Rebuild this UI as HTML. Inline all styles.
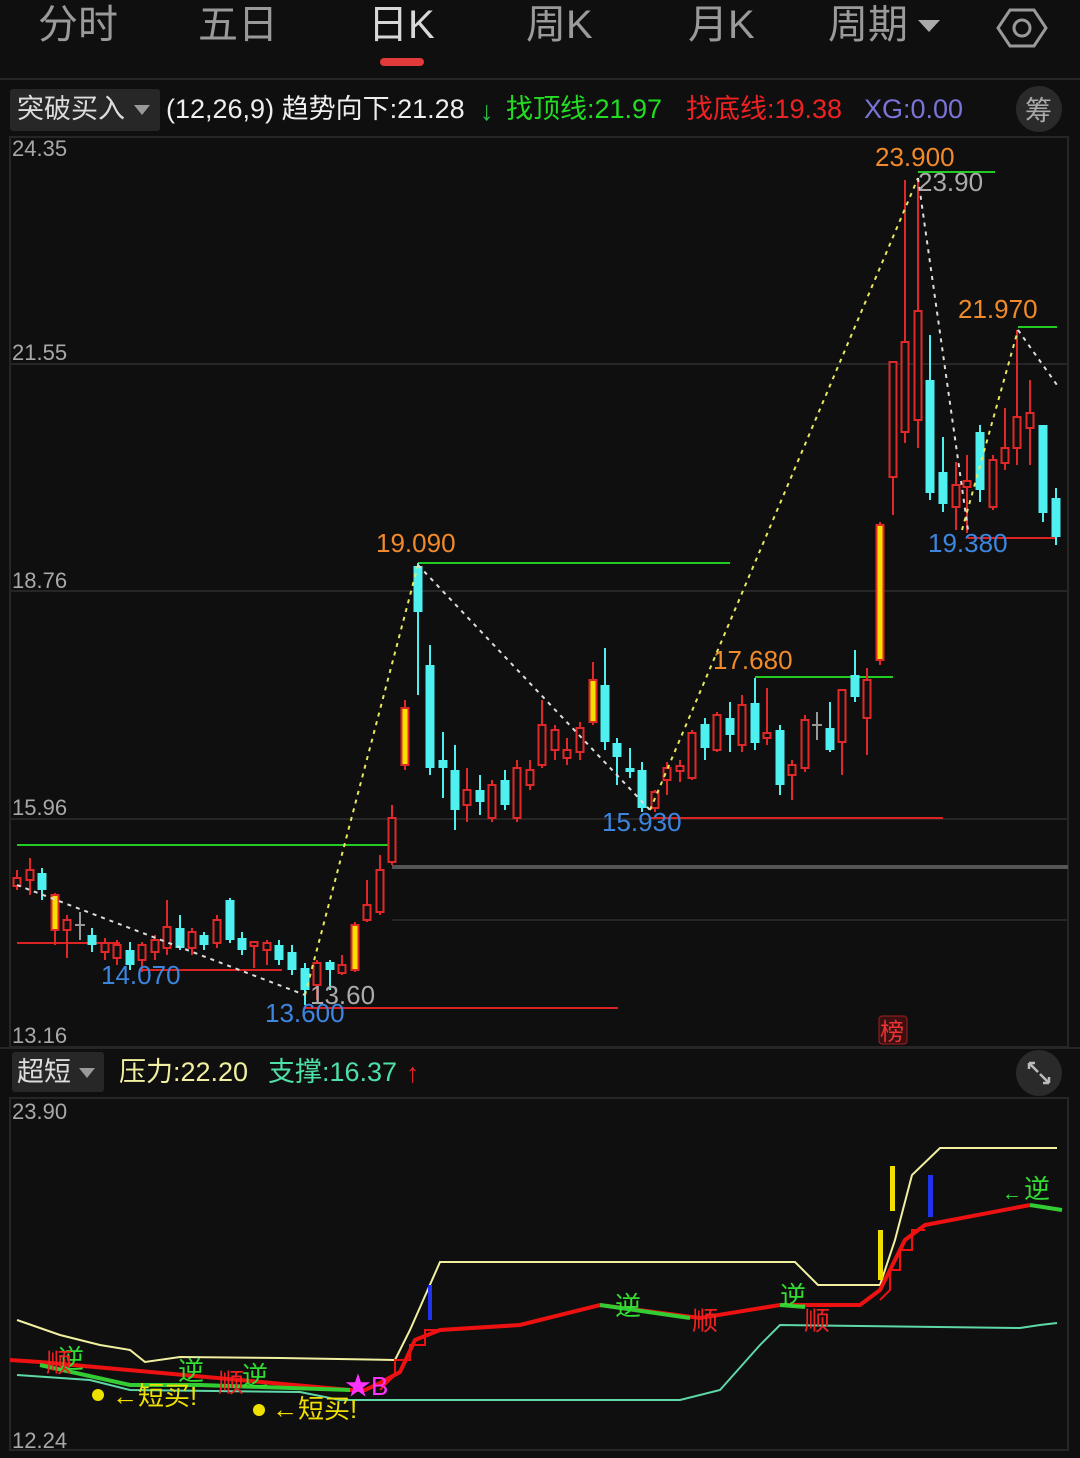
<!DOCTYPE html>
<html><head><meta charset="utf-8">
<style>
html,body{margin:0;padding:0;background:#0f0f0f;width:1080px;height:1458px;overflow:hidden}
svg{display:block}
text{font-family:"Liberation Sans","Noto Sans CJK SC",sans-serif}
</style></head>
<body>
<svg id="s" width="1080" height="1458" viewBox="0 0 1080 1458" xmlns="http://www.w3.org/2000/svg">
<rect width="1080" height="1458" fill="#0f0f0f"/>
<!-- tabs -->
<g font-size="40" fill="#9a9a9a">
<text x="38" y="38">分时</text>
<text x="198" y="38">五日</text>
<text x="368" y="38" fill="#d8d8d8">日K</text>
<text x="526" y="38">周K</text>
<text x="688" y="38">月K</text>
<text x="828" y="38">周期</text>
</g>
<path d="M918 20 L940 20 L929 32 Z" fill="#aaa"/>
<path d="M1010 10 L1034 10 L1046 28 L1034 46 L1010 46 L998 28 Z" fill="none" stroke="#999" stroke-width="3"/>
<circle cx="1022" cy="28" r="8" fill="none" stroke="#999" stroke-width="3"/>
<rect x="380" y="58" width="44" height="8" rx="4" fill="#e23a3a"/>
<rect x="0" y="78" width="1080" height="2" fill="#262626"/>
<!-- indicator row -->
<rect x="10" y="89" width="150" height="42" rx="3" fill="#272727"/>
<text x="17" y="118" font-size="27" fill="#ddd">突破买入</text>
<path d="M134 105 L150 105 L142 115 Z" fill="#999"/>
<text x="166" y="118" font-size="27" fill="#eee">(12,26,9) 趋势向下:21.28</text>
<text x="480" y="120" font-size="27" fill="#2ec24a">↓</text>
<text x="506" y="118" font-size="27" fill="#22dd22">找顶线:21.97</text>
<text x="686" y="118" font-size="27" fill="#ee2222">找底线:19.38</text>
<text x="864" y="118" font-size="27" fill="#7a74d8">XG:0.00</text>
<circle cx="1039" cy="109" r="23" fill="#2a2a2a"/>
<text x="1025" y="120" font-size="27" fill="#aaa">筹</text>
<!-- main chart frame -->
<rect x="10" y="137" width="1058" height="910" fill="none" stroke="#262626" stroke-width="2"/>
<g stroke="#262626" stroke-width="2">
<line x1="10" y1="364" x2="1068" y2="364"/>
<line x1="10" y1="591" x2="1068" y2="591"/>
<line x1="10" y1="819" x2="1068" y2="819"/>
<line x1="392" y1="920" x2="1068" y2="920"/>
</g>
<rect x="392" y="865" width="676" height="4" fill="#555"/>
<g font-size="22" fill="#a8a8a8">
<text x="12" y="156">24.35</text>
<text x="12" y="360">21.55</text>
<text x="12" y="588">18.76</text>
<text x="12" y="815">15.96</text>
<text x="12" y="1043">13.16</text>
</g>
<!-- level lines -->
<g stroke-width="2">
<line x1="17" y1="845" x2="392" y2="845" stroke="#22cc22"/>
<line x1="418" y1="563" x2="730" y2="563" stroke="#22cc22"/>
<line x1="755" y1="677" x2="893" y2="677" stroke="#22cc22"/>
<line x1="918" y1="172" x2="995" y2="172" stroke="#22cc22"/>
<line x1="1018" y1="327" x2="1057" y2="327" stroke="#22cc22"/>
<line x1="17" y1="943" x2="120" y2="943" stroke="#dd2222"/>
<line x1="140" y1="970" x2="282" y2="970" stroke="#dd2222"/>
<line x1="305" y1="1008" x2="618" y2="1008" stroke="#dd2222"/>
<line x1="650" y1="818" x2="943" y2="818" stroke="#dd2222"/>
<line x1="968" y1="538" x2="1057" y2="538" stroke="#dd2222"/>
</g>
<g id="candles"></g>
<!-- zigzag -->
<g fill="none" stroke-width="2" stroke-dasharray="4 5">
<polyline points="305,995 418,565" stroke="#e8e860"/>
<polyline points="650,810 918,178" stroke="#e8e860"/>
<polyline points="962,530 1018,330" stroke="#e8e860"/>
<polyline points="17,885 305,995" stroke="#ddd"/>
<polyline points="418,565 650,810" stroke="#ddd"/>
<polyline points="918,178 968,530" stroke="#ddd"/>
<polyline points="1018,330 1057,385" stroke="#ddd"/>
</g>
<g font-size="26">
<text x="875" y="166" fill="#f08a2a">23.900</text>
<text x="918" y="191" fill="#aaa">23.90</text>
<text x="958" y="318" fill="#f08a2a">21.970</text>
<text x="376" y="552" fill="#f08a2a">19.090</text>
<text x="713" y="669" fill="#f08a2a">17.680</text>
<text x="928" y="552" fill="#3d86e0">19.380</text>
<text x="602" y="831" fill="#3d86e0">15.930</text>
<text x="101" y="984" fill="#3d86e0">14.070</text>
<text x="265" y="1022" fill="#3d86e0">13.600</text>
<text x="310" y="1004" fill="#aaa">13.60</text>
</g>
<rect x="879" y="1016" width="28" height="28" rx="3" fill="#3a1010" stroke="#a02020"/>
<text x="880" y="1040" font-size="24" fill="#ee3333">榜</text>
<!-- sub header -->
<rect x="0" y="1047" width="1080" height="2" fill="#262626"/>
<rect x="12" y="1052" width="92" height="40" rx="3" fill="#272727"/>
<text x="17" y="1081" font-size="27" fill="#ddd">超短</text>
<path d="M79 1068 L95 1068 L87 1078 Z" fill="#999"/>
<text x="119" y="1081" font-size="27" fill="#f0f0a0">压力:22.20</text>
<text x="268" y="1081" font-size="27" fill="#4fe0a8">支撑:16.37</text>
<text x="406" y="1082" font-size="27" fill="#ee2222">↑</text>
<circle cx="1039" cy="1073" r="23" fill="#2a2a2a"/>
<path d="M1029 1063 L1035 1063 M1029 1063 L1029 1069 M1029 1063 L1038 1072 M1049 1083 L1043 1083 M1049 1083 L1049 1077 M1049 1083 L1040 1074" stroke="#bbb" stroke-width="2.5" fill="none"/>
<rect x="10" y="1098" width="1058" height="352" fill="none" stroke="#262626" stroke-width="2"/>
<text x="12" y="1119" font-size="22" fill="#a8a8a8">23.90</text>
<text x="12" y="1448" font-size="22" fill="#a8a8a8">12.24</text>
<!-- sub lines -->
<g fill="none" stroke-width="2">
<polyline stroke="#f0f0a0" points="17,1320 60,1335 100,1345 130,1350 145,1362 180,1357 280,1358 395,1360 410,1330 440,1262 795,1262 818,1285 880,1285 895,1240 912,1175 940,1148 1057,1148"/>
<polyline stroke="#5fd8a8" points="17,1375 90,1380 130,1390 300,1392 340,1400 680,1400 720,1390 760,1345 780,1325 1020,1328 1040,1325 1057,1323"/>
<polyline stroke="#ee1111" stroke-width="4" points="10,1360 40,1362 350,1390 365,1390 380,1383 400,1372 415,1340 440,1330 520,1325 600,1305 700,1318 780,1305 860,1305 880,1290 905,1240 925,1225 1030,1205"/>
<polyline stroke="#ee1111" points="380,1390 395,1375 395,1360 410,1360 410,1345 425,1345 425,1330 440,1330"/>
<polyline stroke="#ee1111" points="880,1300 890,1290 890,1270 900,1270 900,1250 912,1250 912,1230 925,1230"/>
<polyline stroke="#33cc33" stroke-width="4" points="40,1365 130,1385 200,1385 350,1390"/>
<polyline stroke="#33cc33" stroke-width="4" points="600,1305 690,1318"/>
<polyline stroke="#33cc33" stroke-width="4" points="780,1305 805,1307"/>
<polyline stroke="#33cc33" stroke-width="4" points="1030,1205 1062,1210"/>
</g>
<rect x="428" y="1285" width="4" height="35" fill="#2233ee"/>
<rect x="928" y="1175" width="5" height="42" fill="#2233ee"/>
<rect x="890" y="1166" width="5" height="45" fill="#f0e000"/>
<rect x="878" y="1230" width="5" height="50" fill="#f0e000"/>
<g font-size="26">
<text x="58" y="1368" fill="#33dd33">逆</text>
<text x="46" y="1372" fill="#ee2222">顺</text>
<text x="178" y="1380" fill="#33dd33">逆</text>
<text x="218" y="1392" fill="#ee2222">顺</text>
<text x="242" y="1385" fill="#33dd33">逆</text>
<text x="615" y="1315" fill="#33dd33">逆</text>
<text x="692" y="1330" fill="#ee2222">顺</text>
<text x="780" y="1305" fill="#33dd33">逆</text>
<text x="804" y="1330" fill="#ee2222">顺</text>
<text x="1024" y="1198" fill="#33dd33">逆</text>
<text x="1002" y="1200" font-size="20" fill="#33dd33">←</text>
<text x="112" y="1405" fill="#f0e000">←短买!</text>
<text x="272" y="1418" fill="#f0e000">←短买!</text>
<text x="345" y="1395" fill="#ff33ff">★B</text>
</g>
<circle cx="98" cy="1395" r="6" fill="#f0e000"/>
<circle cx="259" cy="1410" r="6" fill="#f0e000"/>
</svg>
<script>
var C=[
[17,'r',878,886,870,890],[30,'r',870,880,858,895],[42,'c',873,890,868,900],[55,'y',895,930,893,945],[67,'r',920,930,915,958],[80,'g',925,925,912,940],[92,'c',935,945,928,952],[105,'r',943,952,938,960],[117,'r',945,958,940,965],[130,'c',950,965,942,970],[142,'r',945,960,942,972],[155,'r',940,952,935,960],[167,'r',927,948,900,955],[180,'c',928,948,915,950],[192,'r',932,948,928,955],[204,'c',935,945,932,950],[217,'r',920,943,915,948],[230,'c',900,940,898,943],[242,'c',938,950,932,955],[254,'r',942,946,942,968],[267,'r',943,950,940,965],[279,'c',945,960,940,965],[292,'c',952,970,945,975],[305,'c',968,990,963,1005],[317,'r',963,985,960,1000],[330,'c',962,970,960,990],[342,'r',965,973,955,975],[355,'y',925,970,922,972],[367,'r',905,920,880,922],[380,'r',870,912,855,915],[392,'r',818,862,805,865],[405,'y',708,765,700,770],[418,'c',566,612,563,695],[430,'c',665,768,645,775],[443,'c',760,768,732,798],[455,'c',770,810,745,830],[467,'r',790,805,768,822],[480,'c',790,802,775,815],[492,'r',785,818,780,822],[505,'c',780,805,770,810],[517,'r',768,818,760,822],[530,'r',770,785,760,790],[542,'r',725,765,700,768],[555,'r',730,750,725,760],[567,'r',750,758,738,765],[580,'r',728,752,722,760],[593,'y',680,722,662,725],[605,'c',685,742,648,750],[617,'c',743,757,738,785],[630,'c',768,772,748,778],[642,'c',770,808,762,812],[655,'r',792,808,790,812],[667,'r',768,780,762,795],[680,'r',766,771,760,782],[692,'r',733,778,730,780],[705,'c',724,748,718,760],[717,'r',715,750,712,752],[730,'c',718,735,702,752],[742,'r',705,745,695,752],[755,'c',703,743,678,750],[767,'r',733,738,688,745],[780,'c',730,785,725,795],[792,'r',765,775,760,800],[805,'r',720,768,715,772],[817,'g',725,725,712,740],[830,'c',728,750,702,752],[842,'r',690,742,690,775],[855,'c',675,697,650,702],[867,'r',680,718,668,755],[880,'y',525,660,522,665],[893,'r',362,477,362,515],[905,'r',342,432,180,443],[918,'r',311,420,178,448],[930,'c',380,493,335,500],[943,'c',472,504,437,512],[956,'r',485,507,462,530],[967,'r',481,487,455,533],[980,'c',432,490,425,502],[993,'r',460,507,455,510],[1005,'r',448,463,408,470],[1017,'r',417,448,330,465],[1030,'r',413,428,380,465],[1043,'c',425,513,425,522],[1056,'c',498,537,488,545]];
var g=document.getElementById('candles'),h='';
C.forEach(function(c){var x=c[0],t=c[1],o=c[2],cl=c[3],hi=c[4],lo=c[5],w=9;
var col=t=='c'?'#4ef0f0':(t=='g'?'#999':'#e02828');
h+='<line x1="'+x+'" y1="'+hi+'" x2="'+x+'" y2="'+lo+'" stroke="'+col+'" stroke-width="2"/>';
if(t=='c')h+='<rect x="'+(x-w/2)+'" y="'+o+'" width="'+w+'" height="'+Math.max(2,cl-o)+'" fill="#4ef0f0"/>';
else if(t=='y')h+='<rect x="'+(x-w/2+1)+'" y="'+o+'" width="'+(w-2)+'" height="'+(cl-o)+'" fill="#f5e000" stroke="#e02828" stroke-width="2"/>';
else if(t=='g')h+='<line x1="'+(x-5)+'" y1="'+o+'" x2="'+(x+5)+'" y2="'+o+'" stroke="#999" stroke-width="2"/>';
else h+='<rect x="'+(x-w/2+1)+'" y="'+o+'" width="'+(w-2)+'" height="'+Math.max(2,cl-o)+'" fill="#0f0f0f" stroke="#e02828" stroke-width="2"/>';
});
g.innerHTML=h;
</script>
</body></html>
